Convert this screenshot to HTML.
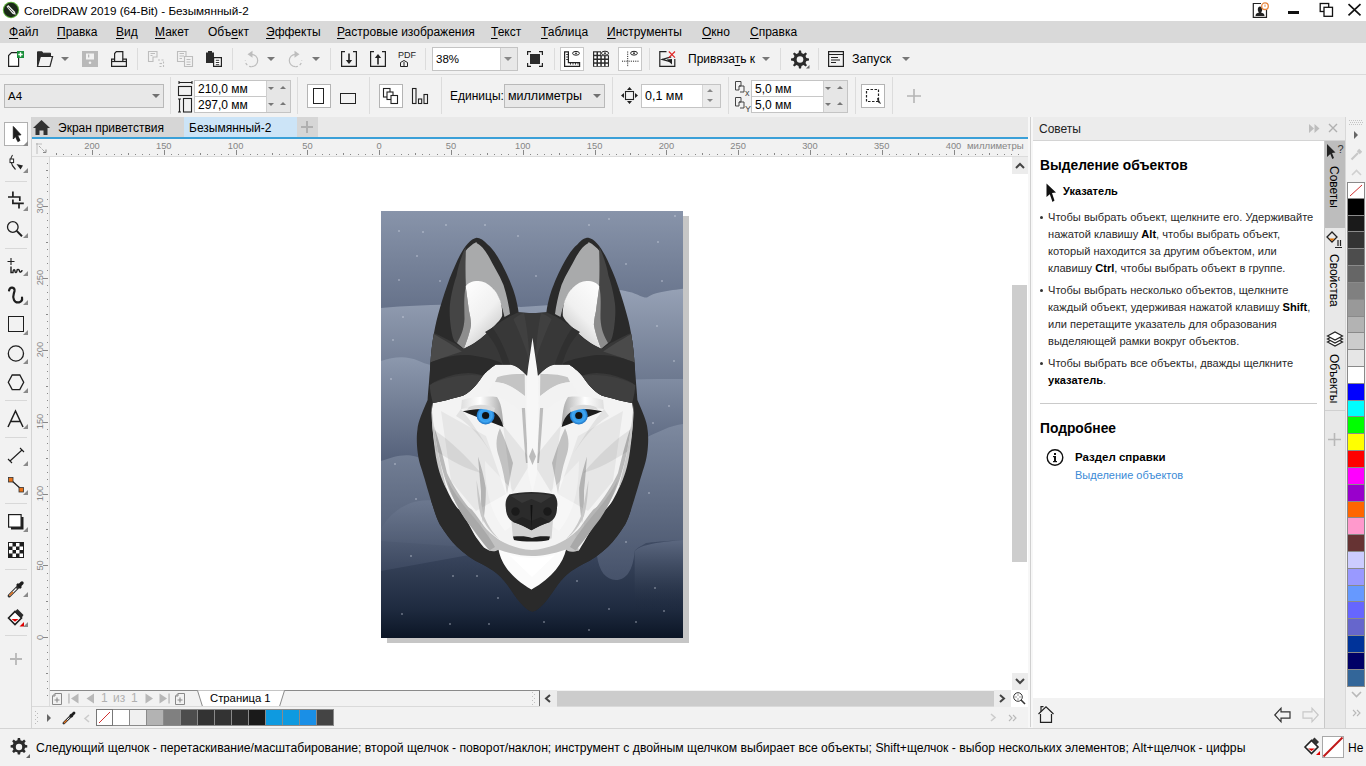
<!DOCTYPE html>
<html><head><meta charset="utf-8">
<style>
*{margin:0;padding:0;box-sizing:border-box}
html,body{width:1366px;height:766px;overflow:hidden;background:#f2f2f2;font-family:"Liberation Sans",sans-serif;color:#000}
.a{position:absolute}
.t{position:absolute;white-space:nowrap;font-size:12px;line-height:14px}
#title{left:0;top:0;width:1366px;height:21px;background:#fff}
#menu{left:0;top:21px;width:1366px;height:22px;background:#d9d9d9}
#std{left:0;top:43px;width:1366px;height:32px;background:#f2f2f2;border-bottom:1px solid #dadada}
#prop{left:0;top:75px;width:1366px;height:43px;background:#f2f2f2}
.vsep{position:absolute;width:1px;background:#dcdcdc}
.u{text-decoration:underline;text-underline-offset:2px}
.field{position:absolute;background:#fff;border:1px solid #c8c8c8}
.spin{position:absolute;background:#e6e6e6;border-left:1px solid #c8c8c8}
.dd{position:absolute;width:0;height:0;border-left:5px solid transparent;border-right:5px solid transparent;border-top:5px solid #666}
.du{position:absolute;width:0;height:0;border-left:4px solid transparent;border-right:4px solid transparent;border-bottom:4px solid #666}
.dn{position:absolute;width:0;height:0;border-left:4px solid transparent;border-right:4px solid transparent;border-top:4px solid #666}
svg{position:absolute;overflow:visible}
</style></head><body>

<!-- TITLE BAR -->
<div id="title" class="a"></div>
<svg style="left:2px;top:1px" width="18" height="18" viewBox="0 0 18 18"><circle cx="9" cy="9" r="8.2" fill="#5fae3a"/><circle cx="9" cy="9" r="7.2" fill="#1a2818"/><path d="M4.5 5.8 L6.3 4 L13 10.7 L13.8 13.8 L10.7 13 Z" fill="#e8e8e8"/><path d="M6.3 6.3 L11.5 11.5" stroke="#1a2818" stroke-width="0.7"/></svg>
<div class="t" style="left:24px;top:4px;font-size:11.7px">CorelDRAW 2019 (64-Bit) - Безымянный-2</div>

<!-- MENU -->
<div id="menu" class="a"></div>
<div class="t" style="left:9px;top:25px"><span class="u">Ф</span>айл</div>
<div class="t" style="left:57px;top:25px"><span class="u">П</span>равка</div>
<div class="t" style="left:116px;top:25px"><span class="u">В</span>ид</div>
<div class="t" style="left:155px;top:25px"><span class="u">М</span>акет</div>
<div class="t" style="left:208px;top:25px">Объ<span class="u">е</span>кт</div>
<div class="t" style="left:266px;top:25px"><span class="u">Э</span>ффекты</div>
<div class="t" style="left:337px;top:25px"><span class="u">Р</span>астровые изображения</div>
<div class="t" style="left:491px;top:25px"><span class="u">Т</span>екст</div>
<div class="t" style="left:541px;top:25px"><span class="u">Т</span>аблица</div>
<div class="t" style="left:607px;top:25px"><span class="u">И</span>нструменты</div>
<div class="t" style="left:702px;top:25px"><span class="u">О</span>кно</div>
<div class="t" style="left:750px;top:25px"><span class="u">С</span>правка</div>

<!-- STANDARD TOOLBAR -->
<div id="std" class="a"></div>


<!-- std icons -->
<svg style="left:8px;top:51px" width="17" height="16" viewBox="0 0 17 16"><path d="M3.5 1.6 H10.6 V15.4 H0.6 V4.5 Z" fill="#fff" stroke="#222" stroke-width="1.2"/><rect x="9" y="0" width="7" height="7" fill="#1a8f3a"/><path d="M12.5 1.3V5.7M10.3 3.5H14.7" stroke="#fff" stroke-width="1.4"/></svg>
<svg style="left:37px;top:51px" width="16" height="16" viewBox="0 0 16 16"><path d="M0.5 15.5 V0.8 H5 L6.5 2.2 H13.5 V5 H3.5 L0.5 15.5 Z" fill="#2b2b2b" stroke="#2b2b2b"/><path d="M0.5 15.5 L3.3 5.5 H15.6 L13 15.5 Z" fill="#f2f2f2" stroke="#2b2b2b" stroke-width="1.2"/></svg>
<div class="dd" style="left:61px;top:57px;border-left-width:4px;border-right-width:4px;border-top-width:4px;border-top-color:#777"></div>
<svg style="left:82px;top:51px" width="16" height="16" viewBox="0 0 16 16"><path d="M0 0 H16 V16 H0 Z" fill="#b9b9b9"/><rect x="4" y="2.5" width="8" height="6" fill="#f2f2f2"/><rect x="6" y="3.5" width="1.3" height="3" fill="#b9b9b9"/><circle cx="8" cy="11.7" r="1.3" fill="#f2f2f2"/></svg>
<svg style="left:111px;top:51px" width="16" height="16" viewBox="0 0 16 16"><path d="M0.6 8.2 H15.4 V15.4 H0.6 Z" fill="none" stroke="#222" stroke-width="1.2"/><path d="M3.6 10.5 V2.5 L5.3 0.6 H11.8 V10.5 H3.6" fill="#f2f2f2" stroke="#222" stroke-width="1.2"/><path d="M0.6 10.5 H15.4" stroke="#222" stroke-width="1.2"/></svg>
<div class="vsep" style="left:137px;top:48px;height:22px"></div>
<svg style="left:148px;top:51px" width="16" height="16" viewBox="0 0 16 16" fill="none" stroke="#bdbdbd" stroke-width="1.1"><path d="M0.5 0.5 H9 V6 H5 V10.5 H0.5 Z M2.5 2.5 H7 M2.5 4.5 H4.5"/><path d="M10 9 H15.5 V15.5 H10.5" stroke-dasharray="2 1.5"/><path d="M11.5 12.5H14"/></svg>
<svg style="left:177px;top:51px" width="16" height="16" viewBox="0 0 16 16" fill="none" stroke="#bdbdbd" stroke-width="1.1"><path d="M0.5 0.5 H9 V10.5 H0.5 Z M2.5 2.5H7M2.5 5H7M2.5 7.5H5"/><path d="M7.5 5.5 H15.5 V15.5 H7.5 Z" fill="#f2f2f2"/><path d="M9.5 8.5H13.5M9.5 11H13.5M9.5 13.5H13.5"/></svg>
<svg style="left:206px;top:51px" width="16" height="16" viewBox="0 0 16 16"><path d="M0 1.5 H2 V0 H6 V1.5 H8 V12 H0 Z" fill="#2b2b2b"/><path d="M7.6 6.6 H15.4 V15.4 H7.6 Z" fill="#fff" stroke="#222" stroke-width="1.2"/><path d="M9.8 9.3H13.2M9.8 11.5H13.2M9.8 13.7H13.2" stroke="#222" stroke-width="0.9"/></svg>
<div class="vsep" style="left:232px;top:48px;height:22px"></div>
<svg style="left:0;top:0" width="330" height="75" viewBox="0 0 330 75" fill="none" stroke="#bdbdbd" stroke-width="1.2"><path d="M251.5 54.3 A6.2 6.2 0 0 1 251.5 66.7"/><path d="M251.5 66.7 A6.2 6.2 0 0 1 245.3 60.5" stroke-dasharray="2.5 2"/><path d="M247.5 54.3 L252.5 50.8 L252.5 57.8 Z" fill="#bdbdbd" stroke="none"/><path d="M295.5 54.3 A6.2 6.2 0 0 0 295.5 66.7"/><path d="M295.5 66.7 A6.2 6.2 0 0 0 301.7 60.5" stroke-dasharray="2.5 2"/><path d="M299.5 54.3 L294.5 50.8 L294.5 57.8 Z" fill="#bdbdbd" stroke="none"/></svg>
<div class="dd" style="left:267px;top:57px;border-left-width:4px;border-right-width:4px;border-top-width:4px;border-top-color:#777"></div>

<div class="dd" style="left:312px;top:57px;border-left-width:4px;border-right-width:4px;border-top-width:4px;border-top-color:#777"></div>
<div class="vsep" style="left:330px;top:48px;height:22px"></div>
<svg style="left:341px;top:51px" width="16" height="16" viewBox="0 0 16 16"><path d="M4 0.6 H0.6 V15.4 H15.4 V0.6 H12" fill="none" stroke="#222" stroke-width="1.2"/><path d="M8 2.5 V11" stroke="#222" stroke-width="1.6"/><path d="M4.8 9 L8 13 L11.2 9 Z" fill="#222"/></svg>
<svg style="left:370px;top:51px" width="16" height="16" viewBox="0 0 16 16"><path d="M4 0.6 H0.6 V15.4 H15.4 V0.6 H12" fill="none" stroke="#222" stroke-width="1.2"/><path d="M8 5 V13.5" stroke="#222" stroke-width="1.6"/><path d="M4.8 7 L8 3 L11.2 7 Z" fill="#222"/></svg>
<div class="t" style="left:398px;top:51px;font-size:9px;line-height:9px;color:#222">PDF</div>
<svg style="left:400px;top:60px" width="8" height="7" viewBox="0 0 8 7" fill="none" stroke="#222" stroke-width="1"><path d="M0.5 2.5 L4 0.5 L7.5 2.5 V6.5 H0.5 Z M4 2 V6"/></svg>
<div class="vsep" style="left:425px;top:48px;height:22px"></div>
<div class="field" style="left:432px;top:47px;width:86px;height:24px;border-color:#c4c4c4"></div>
<div class="spin" style="left:500px;top:48px;width:17px;height:22px;background:#e8e8e8;border-left-color:#d0d0d0"></div>
<div class="dd" style="left:504px;top:57px;border-left-width:4px;border-right-width:4px;border-top-width:4px;border-top-color:#888"></div>
<div class="t" style="left:436px;top:52px;font-size:11.5px">38%</div>
<svg style="left:527px;top:51px" width="16" height="16" viewBox="0 0 16 16"><path d="M0.6 4 V0.6 H4 M12 0.6 H15.4 V4 M15.4 12 V15.4 H12 M4 15.4 H0.6 V12" fill="none" stroke="#222" stroke-width="1.2"/><rect x="3" y="3" width="10" height="10" fill="#2b2b2b"/></svg>
<div class="vsep" style="left:554px;top:48px;height:22px"></div>
<div class="a" style="left:560px;top:47px;width:24px;height:24px;background:#fff;border:1px solid #c8c8c8"></div>


<div class="a" style="left:618px;top:47px;width:24px;height:24px;background:#fff;border:1px solid #c8c8c8"></div>

<div class="vsep" style="left:649px;top:48px;height:22px"></div>

<svg style="left:0;top:0" width="700" height="75" viewBox="0 0 700 75">
<path d="M564.6 51.8 H568.4 V62.6 H579.6 V66.4 H564.6 Z" fill="#fff" stroke="#222" stroke-width="1.2"/>
<path d="M566.2 54.5 H568.4 M566.2 57 H568.4 M566.2 59.5 H568.4 M570.5 64.6 V62.6 M573 64.6 V62.6 M575.5 64.6 V62.6 M578 64.6 V62.6" stroke="#222" stroke-width="0.9"/>
<ellipse cx="576" cy="53.3" rx="3.4" ry="1.9" fill="#fff" stroke="#222" stroke-width="1"/><circle cx="576" cy="53.3" r="0.9" fill="#222"/>
<path d="M593 51.3 H601 V55.2 H609 V66.7 H593 Z" fill="#2b2b2b"/><rect x="594.2" y="52.4" width="2.3" height="2.3" fill="#fff"/><rect x="598.0" y="52.4" width="2.3" height="2.3" fill="#fff"/><rect x="594.2" y="56.2" width="2.3" height="2.3" fill="#fff"/><rect x="598.0" y="56.2" width="2.3" height="2.3" fill="#fff"/><rect x="601.8" y="56.2" width="2.3" height="2.3" fill="#fff"/><rect x="605.6" y="56.2" width="2.3" height="2.3" fill="#fff"/><rect x="594.2" y="60.0" width="2.3" height="2.3" fill="#fff"/><rect x="598.0" y="60.0" width="2.3" height="2.3" fill="#fff"/><rect x="601.8" y="60.0" width="2.3" height="2.3" fill="#fff"/><rect x="605.6" y="60.0" width="2.3" height="2.3" fill="#fff"/><rect x="594.2" y="63.8" width="2.3" height="2.3" fill="#fff"/><rect x="598.0" y="63.8" width="2.3" height="2.3" fill="#fff"/><rect x="601.8" y="63.8" width="2.3" height="2.3" fill="#fff"/><rect x="605.6" y="63.8" width="2.3" height="2.3" fill="#fff"/>
<ellipse cx="605" cy="53.2" rx="3.6" ry="2" fill="#f2f2f2" stroke="#222" stroke-width="1"/><circle cx="605" cy="53.2" r="0.9" fill="#222"/>
<path d="M627.7 51.5 V67" stroke="#222" stroke-width="1" stroke-dasharray="1.1 1.1"/><path d="M622 61.2 H638.5" stroke="#222" stroke-width="1" stroke-dasharray="1.1 1.1"/>
<ellipse cx="634" cy="53.2" rx="3.4" ry="1.9" fill="#fff" stroke="#222" stroke-width="1"/><circle cx="634" cy="53.2" r="0.9" fill="#222"/>
<path d="M666.5 51.6 H659.8 V66.4 H674.8 V59" fill="none" stroke="#222" stroke-width="1.2"/>
<path d="M671.2 56.8 L662.3 59.4 L671.2 62" fill="none" stroke="#222" stroke-width="1.3"/><path d="M666.5 59.5 L672 59 L672 64.5 Z" fill="#222"/>
<path d="M668.8 51.5 L675 57.7 M675 51.5 L668.8 57.7" stroke="#e02020" stroke-width="1.1"/>
</svg>
<div class="t" style="left:688px;top:52px;font-size:12px">Привяза<span class="u">т</span>ь к</div>
<div class="dd" style="left:762px;top:57px;border-left-width:4px;border-right-width:4px;border-top-width:4px;border-top-color:#777"></div>
<div class="vsep" style="left:780px;top:48px;height:22px"></div>
<svg style="left:791px;top:50px" width="19" height="19" viewBox="0 0 19 19"><path d="M9 0.5 L11 0.5 L11.5 3 L13.5 3.9 L15.6 2.4 L17 3.8 L15.5 5.9 L16.4 8 L19 8.5 L19 10.5 L16.4 11 L15.5 13.1 L17 15.2 L15.6 16.6 L13.5 15.1 L11.5 16 L11 18.5 L9 18.5 L8.5 16 L6.5 15.1 L4.4 16.6 L3 15.2 L4.5 13.1 L3.6 11 L1 10.5 L1 8.5 L3.6 8 L4.5 5.9 L3 3.8 L4.4 2.4 L6.5 3.9 L8.5 3 Z" transform="translate(-1,0)" fill="#2b2b2b"/><circle cx="9" cy="9.5" r="3.3" fill="#f2f2f2"/><path d="M15 18.5 L18.5 15 V18.5 Z" fill="#666"/></svg>
<div class="vsep" style="left:818px;top:48px;height:22px"></div>
<svg style="left:828px;top:51px" width="16" height="16" viewBox="0 0 16 16" fill="none" stroke="#222" stroke-width="1.2"><rect x="0.6" y="0.6" width="14.8" height="14.8"/><path d="M0.6 3.5 H15.4 M3 6.5H10M3 9H12M3 11.5H8"/></svg>
<div class="t" style="left:852px;top:52px;font-size:12.5px">Запуск</div>
<div class="dd" style="left:902px;top:57px;border-left-width:4px;border-right-width:4px;border-top-width:4px;border-top-color:#777"></div>

<!-- PROPERTY BAR -->
<div id="prop" class="a"></div>

<!-- prop content -->
<div class="a" style="left:4px;top:84px;width:160px;height:24px;background:#e8e8e8;border:1px solid #b9b9b9"></div>
<div class="t" style="left:8px;top:89px;font-size:11.5px">A4</div>
<div class="dd" style="left:152px;top:94px;border-left-width:4px;border-right-width:4px;border-top-width:4px;border-top-color:#707070"></div>
<div class="vsep" style="left:170px;top:77px;height:37px"></div>
<svg style="left:178px;top:81px" width="16" height="32" viewBox="0 0 16 32" fill="none" stroke="#222" stroke-width="1.1"><path d="M1 1.5 H14 M1 0 V3 M14 0 V3"/><rect x="0.5" y="5.5" width="13" height="9"/><path d="M1.5 18 V31 M0 18H3M0 31H3"/><rect x="5.5" y="17.5" width="8" height="13.5"/></svg>
<div class="field" style="left:194px;top:80px;width:97px;height:33px;border-color:#c4c4c4"></div>
<div class="a" style="left:195px;top:96px;width:95px;height:1px;background:#c8c8c8"></div>
<div class="spin" style="left:266px;top:81px;width:24px;height:31px;background:#e6e6e6;border-left-color:#cfcfcf"></div>
<div class="dn" style="left:268px;top:87px;border-left-width:3.5px;border-right-width:3.5px;border-top-width:3.5px;border-top-color:#777"></div>
<div class="du" style="left:280px;top:86px;border-left-width:3.5px;border-right-width:3.5px;border-bottom-width:3.5px;border-bottom-color:#777"></div>
<div class="dn" style="left:268px;top:103px;border-left-width:3.5px;border-right-width:3.5px;border-top-width:3.5px;border-top-color:#777"></div>
<div class="du" style="left:280px;top:102px;border-left-width:3.5px;border-right-width:3.5px;border-bottom-width:3.5px;border-bottom-color:#777"></div>
<div class="t" style="left:198px;top:82px;font-size:12px">210,0 мм</div>
<div class="t" style="left:198px;top:98px;font-size:12px">297,0 мм</div>
<div class="vsep" style="left:297px;top:77px;height:37px"></div>
<div class="a" style="left:307px;top:84px;width:24px;height:24px;background:#fff;border:1px solid #b4b4b4"></div>
<div class="a" style="left:313px;top:88px;width:11px;height:16px;border:1.2px solid #222"></div>
<div class="a" style="left:340px;top:93px;width:16px;height:11px;border:1.2px solid #222"></div>
<div class="vsep" style="left:369px;top:77px;height:37px"></div>
<div class="a" style="left:379px;top:84px;width:24px;height:24px;background:#fff;border:1px solid #b4b4b4"></div>
<svg style="left:383px;top:88px" width="16" height="16" viewBox="0 0 16 16" fill="#fff" stroke="#222" stroke-width="1.1"><rect x="0.5" y="0.5" width="6.5" height="8.5"/><rect x="4" y="4" width="6" height="7.5"/><rect x="8" y="7.5" width="6.5" height="8"/></svg>
<svg style="left:411px;top:88px" width="18" height="16" viewBox="0 0 18 16" fill="none" stroke="#222" stroke-width="1.1"><rect x="1.5" y="0.5" width="3.5" height="15"/><rect x="7.5" y="11" width="3.2" height="4.5"/><rect x="13" y="6.5" width="3.5" height="9"/></svg>
<div class="vsep" style="left:441px;top:77px;height:37px"></div>
<div class="t" style="left:450px;top:89px;font-size:12px">Единицы:</div>
<div class="a" style="left:504px;top:84px;width:101px;height:24px;background:#e8e8e8;border:1px solid #b9b9b9"></div>
<div class="t" style="left:508px;top:89px;font-size:12.5px">миллиметры</div>
<div class="dd" style="left:593px;top:94px;border-left-width:4px;border-right-width:4px;border-top-width:4px;border-top-color:#707070"></div>
<div class="vsep" style="left:612px;top:77px;height:37px"></div>
<svg style="left:621px;top:87px" width="17" height="17" viewBox="0 0 17 17"><path d="M8.5 0 L11 3 H6 Z M8.5 17 L11 14 H6 Z M0 8.5 L3 6 V11 Z M17 8.5 L14 6 V11 Z" fill="#222"/><rect x="4.5" y="4.5" width="8" height="8" fill="none" stroke="#222" stroke-width="1.1"/></svg>
<div class="field" style="left:641px;top:84px;width:80px;height:24px;border-color:#c4c4c4"></div>
<div class="spin" style="left:702px;top:85px;width:18px;height:22px;background:#ebebeb;border-left-color:#d6d6d6"></div>
<div class="du" style="left:707px;top:89px;border-left-width:3.5px;border-right-width:3.5px;border-bottom-width:3.5px;border-bottom-color:#888"></div>
<div class="dn" style="left:707px;top:99px;border-left-width:3.5px;border-right-width:3.5px;border-top-width:3.5px;border-top-color:#888"></div>
<div class="t" style="left:645px;top:89px;font-size:12.5px">0,1 мм</div>
<div class="vsep" style="left:728px;top:77px;height:37px"></div>
<svg style="left:735px;top:81px" width="16" height="31" viewBox="0 0 16 31" fill="none" stroke="#444" stroke-width="1"><path d="M0.5 0.5H6V5H4V9H0.5Z M4 5H9V11H5"/><path d="M0.5 16.5H6V21H4V25H0.5Z M4 21H9V27H5"/></svg>
<div class="t" style="left:745px;top:89px;font-size:9px;line-height:9px;color:#444">x</div>
<div class="t" style="left:745px;top:105px;font-size:9px;line-height:9px;color:#444">Y</div>
<div class="field" style="left:751px;top:80px;width:97px;height:33px;border-color:#c4c4c4"></div>
<div class="a" style="left:752px;top:96px;width:95px;height:1px;background:#c8c8c8"></div>
<div class="spin" style="left:823px;top:81px;width:24px;height:31px;background:#e6e6e6;border-left-color:#cfcfcf"></div>
<div class="dn" style="left:825px;top:87px;border-left-width:3.5px;border-right-width:3.5px;border-top-width:3.5px;border-top-color:#777"></div>
<div class="du" style="left:837px;top:86px;border-left-width:3.5px;border-right-width:3.5px;border-bottom-width:3.5px;border-bottom-color:#777"></div>
<div class="dn" style="left:825px;top:103px;border-left-width:3.5px;border-right-width:3.5px;border-top-width:3.5px;border-top-color:#777"></div>
<div class="du" style="left:837px;top:102px;border-left-width:3.5px;border-right-width:3.5px;border-bottom-width:3.5px;border-bottom-color:#777"></div>
<div class="t" style="left:755px;top:82px;font-size:12px">5,0 мм</div>
<div class="t" style="left:755px;top:98px;font-size:12px">5,0 мм</div>
<div class="vsep" style="left:855px;top:77px;height:37px"></div>
<div class="a" style="left:861px;top:84px;width:24px;height:24px;background:#fff;border:1px solid #b4b4b4"></div>
<svg style="left:865px;top:88px" width="16" height="16" viewBox="0 0 16 16" fill="none" stroke="#222" stroke-width="1.2"><rect x="1.5" y="1.5" width="12" height="12" stroke-dasharray="2.5 1.5"/><path d="M12.5 10 L15.5 15.5 L13 14 Z" fill="#222" stroke-width="0.6"/></svg>
<div class="vsep" style="left:892px;top:77px;height:37px"></div>
<svg style="left:907px;top:89px" width="14" height="14" viewBox="0 0 14 14"><path d="M7 0V14M0 7H14" stroke="#b5b5b5" stroke-width="1.6"/></svg>

<!-- TOOLBOX -->
<div class="a" style="left:0;top:117px;width:31px;height:611px;background:#f2f2f2"></div>
<div class="a" style="left:31px;top:117px;width:1px;height:611px;background:#d4d4d4"></div>

<!-- TABS ROW -->
<div class="a" style="left:32px;top:117px;width:996px;height:21px;background:#e9e9e9"></div>
<div class="a" style="left:32px;top:117px;width:152px;height:21px;background:#d6d6d6"></div>
<div class="a" style="left:184px;top:117px;width:113px;height:21px;background:#cce4f7"></div>
<div class="a" style="left:297px;top:117px;width:21px;height:21px;background:#d6d6d6"></div>
<svg style="left:300px;top:120px" width="14" height="14" viewBox="0 0 14 14"><path d="M7 1V13M1 7H13" stroke="#b0b0b0" stroke-width="2"/></svg>
<div class="a" style="left:32px;top:137px;width:996px;height:2px;background:#3aa0d8"></div>
<svg style="left:33px;top:120px" width="17" height="15" viewBox="0 0 17 15"><path d="M8.5 0 L17 8 H14.5 V15 H10.5 V10.5 H6.5 V15 H2.5 V8 H0 Z" fill="#333"/></svg>
<div class="t" style="left:58px;top:121px;font-size:12px">Экран приветствия</div>
<div class="t" style="left:189px;top:121px;font-size:12px">Безымянный-2</div>

<!-- RULERS -->
<div class="a" style="left:32px;top:139px;width:996px;height:18px;background:#f2f2f2;border-bottom:1px solid #dcdcdc"></div>
<div class="a" style="left:32px;top:157px;width:18px;height:550px;background:#f2f2f2;border-right:1px solid #dcdcdc"></div>
<svg style="left:36px;top:143px" width="12" height="12" viewBox="0 0 12 12" fill="none" stroke="#888" stroke-width="1"><path d="M1 0.5V11M0.5 1H6M3 3L9 9" stroke-dasharray="1 1"/><path d="M7 9.5H10V6.5" stroke="#888"/></svg>
<div id="hr"><svg class="a" style="left:0;top:0" width="1366" height="766" viewBox="0 0 1366 766"><g><rect x="56" y="153" width="1" height="2" fill="#888"/><rect x="63" y="154" width="1" height="1" fill="#888"/><rect x="71" y="154" width="1" height="1" fill="#888"/><rect x="78" y="154" width="1" height="1" fill="#888"/><rect x="85" y="154" width="1" height="1" fill="#888"/><rect x="92" y="150" width="1" height="5" fill="#888"/><rect x="99" y="154" width="1" height="1" fill="#888"/><rect x="106" y="154" width="1" height="1" fill="#888"/><rect x="114" y="154" width="1" height="1" fill="#888"/><rect x="121" y="154" width="1" height="1" fill="#888"/><rect x="128" y="153" width="1" height="2" fill="#888"/><rect x="135" y="154" width="1" height="1" fill="#888"/><rect x="142" y="154" width="1" height="1" fill="#888"/><rect x="149" y="154" width="1" height="1" fill="#888"/><rect x="157" y="154" width="1" height="1" fill="#888"/><rect x="164" y="150" width="1" height="5" fill="#888"/><rect x="171" y="154" width="1" height="1" fill="#888"/><rect x="178" y="154" width="1" height="1" fill="#888"/><rect x="185" y="154" width="1" height="1" fill="#888"/><rect x="193" y="154" width="1" height="1" fill="#888"/><rect x="200" y="153" width="1" height="2" fill="#888"/><rect x="207" y="154" width="1" height="1" fill="#888"/><rect x="214" y="154" width="1" height="1" fill="#888"/><rect x="221" y="154" width="1" height="1" fill="#888"/><rect x="228" y="154" width="1" height="1" fill="#888"/><rect x="236" y="150" width="1" height="5" fill="#888"/><rect x="243" y="154" width="1" height="1" fill="#888"/><rect x="250" y="154" width="1" height="1" fill="#888"/><rect x="257" y="154" width="1" height="1" fill="#888"/><rect x="264" y="154" width="1" height="1" fill="#888"/><rect x="272" y="153" width="1" height="2" fill="#888"/><rect x="279" y="154" width="1" height="1" fill="#888"/><rect x="286" y="154" width="1" height="1" fill="#888"/><rect x="293" y="154" width="1" height="1" fill="#888"/><rect x="300" y="154" width="1" height="1" fill="#888"/><rect x="307" y="150" width="1" height="5" fill="#888"/><rect x="315" y="154" width="1" height="1" fill="#888"/><rect x="322" y="154" width="1" height="1" fill="#888"/><rect x="329" y="154" width="1" height="1" fill="#888"/><rect x="336" y="154" width="1" height="1" fill="#888"/><rect x="343" y="153" width="1" height="2" fill="#888"/><rect x="350" y="154" width="1" height="1" fill="#888"/><rect x="358" y="154" width="1" height="1" fill="#888"/><rect x="365" y="154" width="1" height="1" fill="#888"/><rect x="372" y="154" width="1" height="1" fill="#888"/><rect x="379" y="150" width="1" height="5" fill="#888"/><rect x="386" y="154" width="1" height="1" fill="#888"/><rect x="394" y="154" width="1" height="1" fill="#888"/><rect x="401" y="154" width="1" height="1" fill="#888"/><rect x="408" y="154" width="1" height="1" fill="#888"/><rect x="415" y="153" width="1" height="2" fill="#888"/><rect x="422" y="154" width="1" height="1" fill="#888"/><rect x="429" y="154" width="1" height="1" fill="#888"/><rect x="437" y="154" width="1" height="1" fill="#888"/><rect x="444" y="154" width="1" height="1" fill="#888"/><rect x="451" y="150" width="1" height="5" fill="#888"/><rect x="458" y="154" width="1" height="1" fill="#888"/><rect x="465" y="154" width="1" height="1" fill="#888"/><rect x="473" y="154" width="1" height="1" fill="#888"/><rect x="480" y="154" width="1" height="1" fill="#888"/><rect x="487" y="153" width="1" height="2" fill="#888"/><rect x="494" y="154" width="1" height="1" fill="#888"/><rect x="501" y="154" width="1" height="1" fill="#888"/><rect x="508" y="154" width="1" height="1" fill="#888"/><rect x="516" y="154" width="1" height="1" fill="#888"/><rect x="523" y="150" width="1" height="5" fill="#888"/><rect x="530" y="154" width="1" height="1" fill="#888"/><rect x="537" y="154" width="1" height="1" fill="#888"/><rect x="544" y="154" width="1" height="1" fill="#888"/><rect x="551" y="154" width="1" height="1" fill="#888"/><rect x="559" y="153" width="1" height="2" fill="#888"/><rect x="566" y="154" width="1" height="1" fill="#888"/><rect x="573" y="154" width="1" height="1" fill="#888"/><rect x="580" y="154" width="1" height="1" fill="#888"/><rect x="587" y="154" width="1" height="1" fill="#888"/><rect x="595" y="150" width="1" height="5" fill="#888"/><rect x="602" y="154" width="1" height="1" fill="#888"/><rect x="609" y="154" width="1" height="1" fill="#888"/><rect x="616" y="154" width="1" height="1" fill="#888"/><rect x="623" y="154" width="1" height="1" fill="#888"/><rect x="630" y="153" width="1" height="2" fill="#888"/><rect x="638" y="154" width="1" height="1" fill="#888"/><rect x="645" y="154" width="1" height="1" fill="#888"/><rect x="652" y="154" width="1" height="1" fill="#888"/><rect x="659" y="154" width="1" height="1" fill="#888"/><rect x="666" y="150" width="1" height="5" fill="#888"/><rect x="674" y="154" width="1" height="1" fill="#888"/><rect x="681" y="154" width="1" height="1" fill="#888"/><rect x="688" y="154" width="1" height="1" fill="#888"/><rect x="695" y="154" width="1" height="1" fill="#888"/><rect x="702" y="153" width="1" height="2" fill="#888"/><rect x="709" y="154" width="1" height="1" fill="#888"/><rect x="717" y="154" width="1" height="1" fill="#888"/><rect x="724" y="154" width="1" height="1" fill="#888"/><rect x="731" y="154" width="1" height="1" fill="#888"/><rect x="738" y="150" width="1" height="5" fill="#888"/><rect x="745" y="154" width="1" height="1" fill="#888"/><rect x="753" y="154" width="1" height="1" fill="#888"/><rect x="760" y="154" width="1" height="1" fill="#888"/><rect x="767" y="154" width="1" height="1" fill="#888"/><rect x="774" y="153" width="1" height="2" fill="#888"/><rect x="781" y="154" width="1" height="1" fill="#888"/><rect x="788" y="154" width="1" height="1" fill="#888"/><rect x="796" y="154" width="1" height="1" fill="#888"/><rect x="803" y="154" width="1" height="1" fill="#888"/><rect x="810" y="150" width="1" height="5" fill="#888"/><rect x="817" y="154" width="1" height="1" fill="#888"/><rect x="824" y="154" width="1" height="1" fill="#888"/><rect x="831" y="154" width="1" height="1" fill="#888"/><rect x="839" y="154" width="1" height="1" fill="#888"/><rect x="846" y="153" width="1" height="2" fill="#888"/><rect x="853" y="154" width="1" height="1" fill="#888"/><rect x="860" y="154" width="1" height="1" fill="#888"/><rect x="867" y="154" width="1" height="1" fill="#888"/><rect x="875" y="154" width="1" height="1" fill="#888"/><rect x="882" y="150" width="1" height="5" fill="#888"/><rect x="889" y="154" width="1" height="1" fill="#888"/><rect x="896" y="154" width="1" height="1" fill="#888"/><rect x="903" y="154" width="1" height="1" fill="#888"/><rect x="910" y="154" width="1" height="1" fill="#888"/><rect x="918" y="153" width="1" height="2" fill="#888"/><rect x="925" y="154" width="1" height="1" fill="#888"/><rect x="932" y="154" width="1" height="1" fill="#888"/><rect x="939" y="154" width="1" height="1" fill="#888"/><rect x="946" y="154" width="1" height="1" fill="#888"/><rect x="954" y="150" width="1" height="5" fill="#888"/><rect x="961" y="154" width="1" height="1" fill="#888"/><rect x="968" y="154" width="1" height="1" fill="#888"/><rect x="975" y="154" width="1" height="1" fill="#888"/><rect x="982" y="154" width="1" height="1" fill="#888"/><rect x="989" y="153" width="1" height="2" fill="#888"/><rect x="997" y="154" width="1" height="1" fill="#888"/><rect x="1004" y="154" width="1" height="1" fill="#888"/><rect x="1011" y="154" width="1" height="1" fill="#888"/><rect x="1018" y="154" width="1" height="1" fill="#888"/></g><g font-family="Liberation Sans" font-size="9.3" fill="#858585"><text x="92.0" y="149" text-anchor="middle">200</text><text x="163.8" y="149" text-anchor="middle">150</text><text x="235.6" y="149" text-anchor="middle">100</text><text x="307.4" y="149" text-anchor="middle">50</text><text x="379.2" y="149" text-anchor="middle">0</text><text x="451.0" y="149" text-anchor="middle">50</text><text x="522.8" y="149" text-anchor="middle">100</text><text x="594.6" y="149" text-anchor="middle">150</text><text x="666.4" y="149" text-anchor="middle">200</text><text x="738.1" y="149" text-anchor="middle">250</text><text x="809.9" y="149" text-anchor="middle">300</text><text x="881.7" y="149" text-anchor="middle">350</text><text x="953.5" y="149" text-anchor="middle">400</text><text x="967" y="149" font-size="9.6">миллиметры</text></g></svg></div>
<div id="vr"><svg class="a" style="left:0;top:0" width="1366" height="766" viewBox="0 0 1366 766"><g><rect x="47" y="695" width="1" height="1" fill="#888"/><rect x="47" y="688" width="1" height="1" fill="#888"/><rect x="47" y="681" width="1" height="1" fill="#888"/><rect x="46" y="673" width="2" height="1" fill="#888"/><rect x="47" y="666" width="1" height="1" fill="#888"/><rect x="47" y="659" width="1" height="1" fill="#888"/><rect x="47" y="652" width="1" height="1" fill="#888"/><rect x="47" y="645" width="1" height="1" fill="#888"/><rect x="43" y="637" width="5" height="1" fill="#888"/><rect x="47" y="630" width="1" height="1" fill="#888"/><rect x="47" y="623" width="1" height="1" fill="#888"/><rect x="47" y="616" width="1" height="1" fill="#888"/><rect x="47" y="609" width="1" height="1" fill="#888"/><rect x="46" y="601" width="2" height="1" fill="#888"/><rect x="47" y="594" width="1" height="1" fill="#888"/><rect x="47" y="587" width="1" height="1" fill="#888"/><rect x="47" y="580" width="1" height="1" fill="#888"/><rect x="47" y="573" width="1" height="1" fill="#888"/><rect x="43" y="565" width="5" height="1" fill="#888"/><rect x="47" y="558" width="1" height="1" fill="#888"/><rect x="47" y="551" width="1" height="1" fill="#888"/><rect x="47" y="544" width="1" height="1" fill="#888"/><rect x="47" y="537" width="1" height="1" fill="#888"/><rect x="46" y="529" width="2" height="1" fill="#888"/><rect x="47" y="522" width="1" height="1" fill="#888"/><rect x="47" y="515" width="1" height="1" fill="#888"/><rect x="47" y="508" width="1" height="1" fill="#888"/><rect x="47" y="501" width="1" height="1" fill="#888"/><rect x="43" y="494" width="5" height="1" fill="#888"/><rect x="47" y="486" width="1" height="1" fill="#888"/><rect x="47" y="479" width="1" height="1" fill="#888"/><rect x="47" y="472" width="1" height="1" fill="#888"/><rect x="47" y="465" width="1" height="1" fill="#888"/><rect x="46" y="458" width="2" height="1" fill="#888"/><rect x="47" y="450" width="1" height="1" fill="#888"/><rect x="47" y="443" width="1" height="1" fill="#888"/><rect x="47" y="436" width="1" height="1" fill="#888"/><rect x="47" y="429" width="1" height="1" fill="#888"/><rect x="43" y="422" width="5" height="1" fill="#888"/><rect x="47" y="414" width="1" height="1" fill="#888"/><rect x="47" y="407" width="1" height="1" fill="#888"/><rect x="47" y="400" width="1" height="1" fill="#888"/><rect x="47" y="393" width="1" height="1" fill="#888"/><rect x="46" y="386" width="2" height="1" fill="#888"/><rect x="47" y="378" width="1" height="1" fill="#888"/><rect x="47" y="371" width="1" height="1" fill="#888"/><rect x="47" y="364" width="1" height="1" fill="#888"/><rect x="47" y="357" width="1" height="1" fill="#888"/><rect x="43" y="350" width="5" height="1" fill="#888"/><rect x="47" y="342" width="1" height="1" fill="#888"/><rect x="47" y="335" width="1" height="1" fill="#888"/><rect x="47" y="328" width="1" height="1" fill="#888"/><rect x="47" y="321" width="1" height="1" fill="#888"/><rect x="46" y="314" width="2" height="1" fill="#888"/><rect x="47" y="306" width="1" height="1" fill="#888"/><rect x="47" y="299" width="1" height="1" fill="#888"/><rect x="47" y="292" width="1" height="1" fill="#888"/><rect x="47" y="285" width="1" height="1" fill="#888"/><rect x="43" y="278" width="5" height="1" fill="#888"/><rect x="47" y="270" width="1" height="1" fill="#888"/><rect x="47" y="263" width="1" height="1" fill="#888"/><rect x="47" y="256" width="1" height="1" fill="#888"/><rect x="47" y="249" width="1" height="1" fill="#888"/><rect x="46" y="242" width="2" height="1" fill="#888"/><rect x="47" y="234" width="1" height="1" fill="#888"/><rect x="47" y="227" width="1" height="1" fill="#888"/><rect x="47" y="220" width="1" height="1" fill="#888"/><rect x="47" y="213" width="1" height="1" fill="#888"/><rect x="43" y="206" width="5" height="1" fill="#888"/><rect x="47" y="199" width="1" height="1" fill="#888"/><rect x="47" y="191" width="1" height="1" fill="#888"/><rect x="47" y="184" width="1" height="1" fill="#888"/><rect x="47" y="177" width="1" height="1" fill="#888"/><rect x="46" y="170" width="2" height="1" fill="#888"/><rect x="47" y="163" width="1" height="1" fill="#888"/></g><g font-family="Liberation Sans" font-size="9.3" fill="#858585"><text transform="translate(42.5,637.4) rotate(-90)" text-anchor="middle">0</text><text transform="translate(42.5,565.4) rotate(-90)" text-anchor="middle">50</text><text transform="translate(42.5,493.5) rotate(-90)" text-anchor="middle">100</text><text transform="translate(42.5,421.5) rotate(-90)" text-anchor="middle">150</text><text transform="translate(42.5,349.6) rotate(-90)" text-anchor="middle">200</text><text transform="translate(42.5,277.6) rotate(-90)" text-anchor="middle">250</text><text transform="translate(42.5,205.7) rotate(-90)" text-anchor="middle">300</text></g></svg></div>

<!-- CANVAS -->
<div class="a" style="left:50px;top:157px;width:978px;height:533px;background:#fff"></div>
<!-- HUSKY START -->
<div class="a" style="left:387px;top:216px;width:302px;height:427px;background:#c6c6c6"></div>
<svg style="left:381px;top:211px" width="302" height="427" viewBox="0 0 302 427">
<defs>
<linearGradient id="sky" x1="0" y1="0" x2="0" y2="1">
<stop offset="0" stop-color="#8894aa"/><stop offset="0.23" stop-color="#66728a"/><stop offset="0.6" stop-color="#56627a"/><stop offset="0.78" stop-color="#3e4a62"/><stop offset="0.93" stop-color="#1f2b40"/><stop offset="1" stop-color="#0b1525"/></linearGradient>
<linearGradient id="b1" x1="0" y1="0" x2="0" y2="1"><stop offset="0" stop-color="#96a1b5"/><stop offset="1" stop-color="#6a768d"/></linearGradient>
<linearGradient id="b2" x1="0" y1="0" x2="0" y2="1"><stop offset="0" stop-color="#8c98ad"/><stop offset="1" stop-color="#55617a"/></linearGradient>
<linearGradient id="b3" x1="0" y1="0" x2="0" y2="1"><stop offset="0" stop-color="#7d899f"/><stop offset="1" stop-color="#46526a"/></linearGradient>
<linearGradient id="b4" x1="0" y1="0" x2="0" y2="1"><stop offset="0" stop-color="#6e7a91"/><stop offset="1" stop-color="#3e4a62"/></linearGradient>
<linearGradient id="earw" x1="0" y1="0" x2="0.6" y2="1"><stop offset="0" stop-color="#ffffff"/><stop offset="0.6" stop-color="#f0f0f0"/><stop offset="1" stop-color="#c8c8c8"/></linearGradient>
<linearGradient id="brow" x1="0" y1="0" x2="1" y2="0"><stop offset="0" stop-color="#dedede"/><stop offset="0.45" stop-color="#ffffff"/><stop offset="1" stop-color="#a8a8a8"/></linearGradient>
<radialGradient id="iris" cx="0.5" cy="0.5" r="0.5"><stop offset="0" stop-color="#1f7fd8"/><stop offset="0.7" stop-color="#3ea6f2"/><stop offset="1" stop-color="#1b6fc0"/></radialGradient>
<g id="halfL">
<!-- ear inner gray -->
<path d="M95.6 31 C91 33 87 37 84.5 40 C84 52 84 65 84.5 76 L112 77.4 C118 85 121 95 123.5 106 L129 103 C128 95 126 85 122.5 74 C118 63 112 54 108 46 C104 39 100 34 95.6 32 Z" fill="#a9aaab"/>
<!-- ear dark gray -->
<path d="M84.7 36 C80 46 77 56 75.5 64.7 C72 75 70 85 69.1 92 C68 100 69 110 70 117.6 C71 124 72 128 73.7 130.4 L82.8 137.7 C85 132 88 125 90.1 114 C90 108 88 102 87.4 95.7 C86 88 84.7 80 84.7 75.6 C84.3 62 84.3 48 84.7 36 Z" fill="#454545"/>
<!-- ear gray crescent -->
<path d="M84.7 75.6 C86 85 87.4 95.7 88 100 C90 108 90.1 114 90.1 114 C88 125 85 132 82.8 137.7 L76 132 C80 125 83 118 83.5 108 C83.5 96 82.5 86 84.7 75.6 Z" fill="#8d8d8d"/>
<!-- ear white leaf -->
<path d="M97.4 70 C91 70 86.5 72 84.7 75.6 C86 85 87.4 95.7 88 100 C90 108 90.1 114 90.1 114 C88 125 85 132 82.8 137.7 C93 133 101 127 106.6 121.3 C114 114 120 109 121.2 104.8 C121.5 99 120.5 94 119.4 90 C117 84 114.5 79.5 112 77.4 C107 72.5 102 70 97.4 70 Z" fill="url(#earw)"/>
<!-- cap under ear -->
<path d="M49 121 C55 122 65 128 71.2 131 C78 134 81 138 82.8 137.7 C95 133 105 124 111.5 116.4 C120 110 130 104 137.6 101.2 C142 101.5 146 101.9 152.5 101.9 L152.5 126.8 C149 140 147 152 146.1 164.7 C140 158 134 154 129.2 153.4 L114.7 153.4 C108 158 104 162 101.8 164.7 C95 175 88 183 79 185.6 C70 188 60 191 51.9 192 C50 175 49 150 49 121 Z" fill="#383838"/>
<path d="M49 121 C58 126 70 133 80.9 140.5 C70 144 58 148 48.7 151.8 Z" fill="#4a4a4a"/>
<path d="M48.7 151.8 C62 146 80 141 100 146 C110 148 118 150 122 153.4 L114.7 153.4 C108 158 104 162 101.8 164.7 C90 160 75 162 60 168 C55 170 51 172 48.7 174 Z" fill="#2b2b2b"/>
<path d="M48.7 174 C60 168 80 162 101.8 164.7 C95 175 88 183 79 185.6 C70 188 60 191 51.9 192 C50 185 49 180 48.7 174 Z" fill="#3f3f3f"/>
<path d="M132.4 108.3 C136 105 140 103 143 102 C146 115 148 135 148.5 150.2 C144 135 138 120 132.4 108.3 Z" fill="#404040"/>
<path d="M111.5 116.4 C118 125 124 138 129.2 153.4 L122 153.4 C118 140 112 128 104 121 Z" fill="#303030"/>
<!-- mask facets left -->
<path d="M116.3 166.3 C125 163 135 163 143.7 163 L144 185 C135 178 125 172 114 171 Z" fill="#c4c4c4"/>
<path d="M112 172 C122 170 134 176 144 186 L144 205 C135 195 122 186 106 182 Z" fill="#f2f2f2"/>
<path d="M80.9 188.9 C92 186 105 185 116 186 C120 192 121 198 122.5 214 C112 202 100 196 80 198 Z" fill="url(#brow)"/>
<path d="M50 193.7 C52 210 54 225 56 236 C58 248 62 262 65.6 278.3 C60 268 56 255 54 240 C52 225 50.5 210 50 193.7 Z" fill="#c8c8c8"/>
<path d="M53 215 C58 230 62 245 66 262 C72 275 82 290 92 302 L86 300 C76 290 68 276 62.5 262.6 C58 248 55 232 53 215 Z" fill="#bababa"/>
<path d="M97 245.4 C100 255 103 265 104.8 276.7 C105 290 104 300 102 312 C100 300 100 290 100 280 C99 270 98 258 97 245.4 Z" fill="#bdbdbd"/>
<path d="M118.9 217.2 C124 228 128 240 132 252 C130 262 128 272 126 283 C124 270 122 258 118 246 C115 238 114 228 118.9 217.2 Z" fill="#c2c2c2"/>
<path d="M140.8 197 C142 215 143 232 145 252 L147 252 C146 232 145 215 144 197 Z" fill="#bcbcbc"/>
<path d="M80 198 C90 210 100 225 112 245 C104 232 92 215 75 205 Z" fill="#e2e2e2"/>
<path d="M62.5 262.6 C70 278 80 292 90.7 298.6 C100 310 108 322 114 336 C105 326 95 314 86 306 C76 296 68 282 62.5 262.6 Z" fill="#b6b6b6"/>
<path d="M100 312 C108 322 120 332 134 338 C120 336 108 328 100 320 Z" fill="#bdbdbd"/>
<!-- eye -->
<path d="M81.6 200.2 C92 198.5 104 196 113 201 C118 204 121 210 122.4 215.9 C115 213 106 210 96 206 C90 203.5 85 201.5 81.6 200.2 Z" fill="#1c1c1c"/>
</g>
<clipPath id="clipS"><path d="M95.6 26.7 C88 28 80 40 73.7 55.5 C67 70 60 92 55.4 110.3 C52 125 50 140 49 159 C48 172 47 182 46.6 189 C42 200 37 210 36.4 219 C35 228 36 245 40 256.2 C43 265 47 280 51.3 293.5 C54 302 56 308 58.7 313.3 C64 322 70 330 76 335.7 C84 343 92 349 100.9 353 C106 356 110 358 113.3 360.5 C118 364 122 368 125.7 372.9 C130 379 134 385 138.1 390.3 C143 396 148 400.5 151.5 400.6 C155 400.5 160 396 164.9 390.3 C169 385 173 379 177.3 372.9 C181 368 185 364 189.7 360.5 C193 358 197 356 202.1 353 C211 349 219 343 227 335.7 C233 330 239 322 244.3 313.3 C247 308 249 302 251.7 293.5 C256 280 260 265 263 256.2 C267 245 268 228 266.6 219 C266 210 261 200 256.4 189 C256 182 255 172 254 159 C253 140 251 125 247.6 110.3 C243 92 236 70 229.3 55.5 C223 40 215 28 207.4 26.7 C203 26.7 200 29 196.4 33.6 C188 40 178 60 172.7 73.8 C170 80 167 90 165.4 101.2 C161 101.5 156 101.9 151.5 101.9 C147 101.9 142 101.5 137.6 101.2 C136 90 133 80 130.3 73.8 C125 60 115 40 106.6 33.6 C103 29 99 26.7 95.6 26.7 Z"/></clipPath>
<linearGradient id="b5" x1="0" y1="0" x2="0" y2="1"><stop offset="0" stop-color="#5c6880"/><stop offset="0.5" stop-color="#3a465c" stop-opacity="0.7"/><stop offset="1" stop-color="#1a2639" stop-opacity="0"/></linearGradient>
</defs>
<rect width="302" height="427" fill="url(#sky)"/>
<path d="M0 97 C40 93 110 92 140 96 L200 92 C215 88 228 80 238.8 79 C245 80 248 81 251 81.5 C258 84 262 87 266 86.5 C270 84 274 82 278.3 81.5 C285 80 292 79 302 77.8 L302 175 C250 170 200 168 150 168 L0 158 Z" fill="url(#b1)"/>
<path d="M0 150 C12 146 25 144 38 150 C55 158 90 160 120 158 L190 172 C230 168 270 168 302 168 L302 245 C270 242 240 238 210 240 L0 250 Z" fill="url(#b2)"/>
<path d="M0 250 C15 245 28 240 45 250 L120 250 L210 240 C225 232 240 226 262 228 C275 222 290 214 302 213 L302 329 C285 330 270 331 265 332 C258 336 255 338 253.7 340 C252 360 245 369 235 369 C225 369 218 360 216 345 L0 330 Z" fill="url(#b3)"/>
<path d="M0 318 C10 300 30 286 55 290 C80 300 100 330 110 340 L0 360 Z" fill="url(#b4)" opacity="0.8"/>
<path d="M253.7 340 C258 336 265 332 302 329 L302 400 L253.7 400 Z" fill="url(#b5)"/>
<g fill="#dfe4ee" opacity="0.7">
<circle cx="18" cy="20" r="0.8"/><circle cx="42" cy="21" r="0.8"/><circle cx="65" cy="14" r="0.8"/><circle cx="104" cy="14" r="0.8"/><circle cx="137" cy="25" r="0.8"/><circle cx="208" cy="14" r="0.8"/><circle cx="228" cy="8" r="0.8"/><circle cx="277" cy="31" r="0.8"/><circle cx="294" cy="5" r="0.8"/><circle cx="36" cy="45" r="0.8"/><circle cx="155" cy="65" r="0.8"/><circle cx="245" cy="53" r="0.8"/><circle cx="281" cy="70" r="0.8"/><circle cx="18" cy="69" r="0.8"/><circle cx="59" cy="70" r="0.8"/><circle cx="22" cy="106" r="0.8"/><circle cx="276" cy="115" r="0.8"/><circle cx="12" cy="129" r="0.8"/><circle cx="293" cy="150" r="0.8"/><circle cx="10" cy="168" r="0.8"/><circle cx="272" cy="212" r="0.8"/><circle cx="14" cy="253" r="0.8"/><circle cx="288" cy="195" r="0.8"/><circle cx="35" cy="288" r="0.8"/><circle cx="268" cy="282" r="0.8"/><circle cx="62" cy="316" r="0.8"/><circle cx="30" cy="345" r="0.8"/><circle cx="72" cy="365" r="0.8"/><circle cx="96" cy="365" r="0.8"/><circle cx="117" cy="387" r="0.8"/><circle cx="196" cy="370" r="0.8"/><circle cx="228" cy="398" r="0.8"/><circle cx="283" cy="400" r="0.8"/><circle cx="21" cy="403" r="0.8"/><circle cx="69" cy="413" r="0.8"/><circle cx="108" cy="413" r="0.8"/><circle cx="163" cy="411" r="0.8"/><circle cx="208" cy="419" r="0.8"/><circle cx="255" cy="411" r="0.8"/><circle cx="274" cy="377" r="0.8"/><circle cx="245" cy="331" r="0.8"/>
</g>
<!-- silhouette -->
<path d="M95.6 26.7 C88 28 80 40 73.7 55.5 C67 70 60 92 55.4 110.3 C52 125 50 140 49 159 C48 172 47 182 46.6 189 C42 200 37 210 36.4 219 C35 228 36 245 40 256.2 C43 265 47 280 51.3 293.5 C54 302 56 308 58.7 313.3 C64 322 70 330 76 335.7 C84 343 92 349 100.9 353 C106 356 110 358 113.3 360.5 C118 364 122 368 125.7 372.9 C130 379 134 385 138.1 390.3 C143 396 148 400.5 151.5 400.6 C155 400.5 160 396 164.9 390.3 C169 385 173 379 177.3 372.9 C181 368 185 364 189.7 360.5 C193 358 197 356 202.1 353 C211 349 219 343 227 335.7 C233 330 239 322 244.3 313.3 C247 308 249 302 251.7 293.5 C256 280 260 265 263 256.2 C267 245 268 228 266.6 219 C266 210 261 200 256.4 189 C256 182 255 172 254 159 C253 140 251 125 247.6 110.3 C243 92 236 70 229.3 55.5 C223 40 215 28 207.4 26.7 C203 26.7 200 29 196.4 33.6 C188 40 178 60 172.7 73.8 C170 80 167 90 165.4 101.2 C161 101.5 156 101.9 151.5 101.9 C147 101.9 142 101.5 137.6 101.2 C136 90 133 80 130.3 73.8 C125 60 115 40 106.6 33.6 C103 29 99 26.7 95.6 26.7 Z" fill="#2a2a2a"/>
<!-- white mask base -->
<path d="M51.9 192 C60 191 70 188 79 185.6 C88 183 95 175 101.8 164.7 C104 162 108 158 114.7 153.4 L129.2 153.4 C134 154 140 158 146.1 164.7 L151.5 164.7 L156.9 164.7 C163 158 169 154 173.8 153.4 L188.3 153.4 C195 158 199 162 201.2 164.7 C208 175 215 183 224 185.6 C233 188 243 191 251.1 192 L252 198 C252 215 251 225 248 240 C245 255 242 268 237.4 278.3 C232 290 228 296 224.9 298.6 C220 305 214 315 209 325 C206 332 202 338 196 341 C190 350 184 360 176 369 C168 376 160 378.5 151.5 378.5 C143 378.5 135 376 127 369 C119 360 113 350 107 341 C101 338 97 332 94 325 C89 315 83 305 78.1 298.6 C75 296 71 290 65.6 278.3 C61 268 58 255 55 240 C52 225 51 215 51 198 Z" fill="#f3f3f3"/>
<g clip-path="url(#clipS)"><use href="#halfL"/>
<use href="#halfL" transform="translate(303,0) scale(-1,1)"/></g>

<!-- translucent facets -->
<path d="M60 200 L105 225 L125 283 L95 300 L70 270 Z" fill="#000" opacity="0.05"/>
<path d="M242 200 L197 225 L177 283 L207 300 L232 270 Z" fill="#000" opacity="0.05"/>
<path d="M122 214 L151 250 L131 283 Z" fill="#000" opacity="0.06"/>
<path d="M180 214 L151 250 L171 283 Z" fill="#000" opacity="0.06"/>
<path d="M52 218 C70 230 85 245 100 262 C85 258 70 250 55 240 Z" fill="#000" opacity="0.07"/>
<path d="M250 218 C232 230 217 245 202 262 C217 258 232 250 247 240 Z" fill="#000" opacity="0.07"/>
<path d="M104 250 L151 300 L124 320 C112 305 104 285 104 250 Z" fill="#fff" opacity="0.35"/>
<path d="M198 250 L151 300 L178 320 C190 305 198 285 198 250 Z" fill="#fff" opacity="0.35"/>
<!-- lower chin structure -->
<g clip-path="url(#clipS)">
<path d="M62.7 280 C68 290 74 298 79.1 303.7 C88 316 96 328 102.9 336.6 C105 338 107 339 108.3 339.4 L117.5 338.4 L150.4 378.6 L185.1 338.4 L197.9 339.4 C205 328 212 315 218 305.5 C226 297 233 290 239 283.6 L250 283.6 L252 420 L50 420 L50 280 Z" fill="#2a2a2a"/>
<path d="M117.5 338.4 C128 342 140 344 151 344 C162 344 174 342 185.1 338.4 C182 352 172 366 150.4 378.6 C129 366 120 352 117.5 338.4 Z" fill="#fbfbfb"/>
<path d="M128 344 C138 346 145 347 151 347 C157 347 164 346 174 344 L151 366 Z" fill="#ffffff"/>
<path d="M108 322 C120 332 135 338 151 339 C167 338 182 332 194 322 L197.9 339.4 C190 342 186 340 185.1 338.4 C172 343 160 345 151 345 C142 345 130 343 117.5 338.4 C116 340 112 341 108.3 339.4 Z" fill="#c2c2c2"/>
<path d="M66.3 269 C72 280 80 292 90 303 C100 315 108 325 114 336 L108.3 339.4 C100 330 92 318 84 308 C76 296 70 284 66.3 269 Z" fill="#a9a9a9"/>
<path d="M236.7 269 C231 280 223 292 213 303 C203 315 195 325 189 336 L194.7 339.4 C203 330 211 318 219 308 C227 296 233 284 236.7 269 Z" fill="#a9a9a9"/>
<path d="M95.5 269 C98 282 100 295 103 305 C107 315 112 322 118 328 C110 322 104 314 100 305 C97 295 96 282 95.5 269 Z" fill="#c8c8c8"/>
<path d="M207.5 269 C205 282 203 295 200 305 C196 315 191 322 185 328 C193 322 199 314 203 305 C206 295 207 282 207.5 269 Z" fill="#c8c8c8"/>
</g>
<!-- blaze -->
<path d="M151.5 126.8 C153 138 155.5 152 156.9 164.7 C158 190 157 230 156 262 L151.5 282 L147 262 C146 230 145 190 146.1 164.7 C147.5 152 150 138 151.5 126.8 Z" fill="#f7f7f7"/>
<path d="M151.5 237 L155 245.4 L151.5 254 L148 245.4 Z" fill="#bcbcbc"/>
<!-- under nose & mouth -->
<path d="M130.3 309 L172 309 L170.5 327.5 C162 329 141 329 132 327.5 Z" fill="#d2d2d2"/>
<path d="M132 325.5 C140 325 146 325 151 327 C156 325 162 325 169 325.5 L168 329 C160 331 142 331 133 329 Z" fill="#1e1e1e"/>
<!-- nose -->
<path d="M128.4 283.6 C134 282 142 281 150.4 280.9 C159 281 167 282 173.2 283.6 C176 287 177 292 176 296.4 C176 303 174 308 169 311 C162 313 156 316 150.4 319.3 C145 316 139 313 132.1 311 C127 308 125 303 124.8 296.4 C124 292 125 287 128.4 283.6 Z" fill="#2b2b2b"/>
<path d="M130 285 C138 282 163 282 171 285 L160 292 L150.4 288 L141 292 Z" fill="#383838"/>
<path d="M132.1 311 C139 313 145 316 150.4 319.3 C156 316 162 313 169 311 L160 306 L150.4 310 L141 306 Z" fill="#232323"/>
<circle cx="134.5" cy="300.5" r="4.2" fill="#1a1a1a"/><circle cx="166.5" cy="300.5" r="4.2" fill="#1a1a1a"/>
<path d="M149.5 294 L150.4 318 L151.5 294 Z" fill="#111"/>
<!-- irises -->
<circle cx="104.6" cy="204.5" r="9" fill="url(#iris)"/><circle cx="104.6" cy="204.5" r="3.6" fill="#111"/>
<circle cx="197.8" cy="204.5" r="9" fill="url(#iris)"/><circle cx="197.8" cy="204.5" r="3.6" fill="#111"/>
<path d="M88 196 C96 193 106 193 114 197 L113 201 C104 197 96 197 86 199 Z" fill="#d9d9d9"/>
<path d="M215 196 C207 193 197 193 189 197 L190 201 C199 197 207 197 217 199 Z" fill="#d9d9d9"/>
</svg>

<!-- HUSKY END -->
<!-- v scrollbar -->
<div class="a" style="left:1012px;top:157px;width:16px;height:17px;background:#ececec"></div>
<svg style="left:1015px;top:162px" width="10" height="7" viewBox="0 0 10 7"><path d="M1 6 L5 2 L9 6" fill="none" stroke="#444" stroke-width="2"/></svg>
<div class="a" style="left:1012px;top:285px;width:15px;height:277px;background:#cdcdcd"></div>
<div class="a" style="left:1012px;top:673px;width:16px;height:17px;background:#ececec"></div>
<svg style="left:1015px;top:678px" width="10" height="7" viewBox="0 0 10 7"><path d="M1 1 L5 5 L9 1" fill="none" stroke="#444" stroke-width="2"/></svg>
<div class="a" style="left:1030px;top:117px;width:1px;height:610px;background:#d0d0d0"></div>
<div class="a" style="left:1028px;top:117px;width:2px;height:611px;background:#f7f7f7"></div>
<div class="a" style="left:1031px;top:117px;width:2px;height:611px;background:#f7f7f7"></div>

<!-- PAGE NAV + H SCROLL -->
<div class="a" style="left:50px;top:690px;width:978px;height:17px;background:#f2f2f2"></div>
<div class="a" style="left:50px;top:690px;width:490px;height:1px;background:#8a8a8a"></div>
<div class="a" style="left:539px;top:690px;width:1px;height:17px;background:#6e6e6e"></div>
<svg style="left:197px;top:690px" width="89" height="17" viewBox="0 0 89 17"><path d="M0.5 0.5 L5.5 16.5 H82.5 L87.5 0.5" fill="#fff" stroke="#8a8a8a" stroke-width="1"/></svg>
<div class="a" style="left:285px;top:690px;width:255px;height:1px;background:#8a8a8a"></div>
<div class="t" style="left:210px;top:691px;font-size:11.3px">Страница 1</div>
<div class="a" style="left:32px;top:706px;width:996px;height:1px;background:#dadada"></div>
<div class="a" style="left:540px;top:690px;width:17px;height:17px;background:#ececec"></div>
<svg style="left:544px;top:694px" width="8" height="9" viewBox="0 0 8 9"><path d="M6 1 L2 4.5 L6 8" fill="none" stroke="#444" stroke-width="2"/></svg>
<div class="a" style="left:557px;top:691px;width:437px;height:15px;background:#cccccc"></div>
<div class="a" style="left:994px;top:690px;width:17px;height:17px;background:#ececec"></div>
<svg style="left:998px;top:694px" width="8" height="9" viewBox="0 0 8 9"><path d="M2 1 L6 4.5 L2 8" fill="none" stroke="#444" stroke-width="2"/></svg>
<div class="a" style="left:1011px;top:690px;width:17px;height:17px;background:#fff"></div>
<svg style="left:1013px;top:692px" width="13" height="13" viewBox="0 0 13 13" fill="none" stroke="#333" stroke-width="1"><circle cx="5" cy="5" r="4.3"/><path d="M8 8 L12 12" stroke-width="1.6"/><path d="M5 2.5V3.5M5 6.5V7.5M2.5 5H3.5M6.5 5H7.5"/></svg>

<!-- PALETTE BAR (bottom doc palette) -->
<div class="a" style="left:32px;top:707px;width:996px;height:21px;background:#f2f2f2"></div>
<div id="docpal"><div class="a" style="left:96px;top:709px;width:17px;height:17px;background:#fff;border:1px solid #777"></div><svg style="left:96px;top:709px" width="17" height="17"><path d="M3 14 L14 3" stroke="#d03030" stroke-width="1"/></svg><div class="a" style="left:113px;top:709px;width:17px;height:17px;background:#ffffff;border:1px solid #8a8a8a;border-left:none"></div><div class="a" style="left:130px;top:709px;width:17px;height:17px;background:#f0f0f0;border:1px solid #8a8a8a;border-left:none"></div><div class="a" style="left:147px;top:709px;width:17px;height:17px;background:#b3b3b3;border:1px solid #8a8a8a;border-left:none"></div><div class="a" style="left:164px;top:709px;width:17px;height:17px;background:#808080;border:1px solid #8a8a8a;border-left:none"></div><div class="a" style="left:181px;top:709px;width:17px;height:17px;background:#4d4d4d;border:1px solid #8a8a8a;border-left:none"></div><div class="a" style="left:198px;top:709px;width:17px;height:17px;background:#333333;border:1px solid #8a8a8a;border-left:none"></div><div class="a" style="left:215px;top:709px;width:17px;height:17px;background:#333333;border:1px solid #8a8a8a;border-left:none"></div><div class="a" style="left:232px;top:709px;width:17px;height:17px;background:#2b2b2b;border:1px solid #8a8a8a;border-left:none"></div><div class="a" style="left:249px;top:709px;width:17px;height:17px;background:#1a1a1a;border:1px solid #8a8a8a;border-left:none"></div><div class="a" style="left:266px;top:709px;width:17px;height:17px;background:#0e9ae0;border:1px solid #8a8a8a;border-left:none"></div><div class="a" style="left:283px;top:709px;width:17px;height:17px;background:#0e9ae0;border:1px solid #8a8a8a;border-left:none"></div><div class="a" style="left:300px;top:709px;width:17px;height:17px;background:#1a8fe6;border:1px solid #8a8a8a;border-left:none"></div><div class="a" style="left:317px;top:709px;width:17px;height:17px;background:#444444;border:1px solid #8a8a8a;border-left:none"></div><svg style="left:34px;top:711px" width="6" height="14"><g fill="#bbb"><rect x="1" y="0" width="1" height="1"/><rect x="3" y="2" width="1" height="1"/><rect x="1" y="4" width="1" height="1"/><rect x="3" y="6" width="1" height="1"/><rect x="1" y="8" width="1" height="1"/><rect x="3" y="10" width="1" height="1"/><rect x="1" y="12" width="1" height="1"/></g></svg><svg style="left:47px;top:714px" width="5" height="8"><path d="M0 0L4 4L0 8Z" fill="#666"/></svg><svg style="left:62px;top:711px" width="14" height="14" viewBox="0 0 14 14"><path d="M1.8 12.2 L8.5 5.5" stroke="#333" stroke-width="2.6" stroke-linecap="round"/><path d="M2 12 L7.5 6.5" stroke="#fff" stroke-width="0.9"/><path d="M2 12 L4.8 9.2" stroke="#e8731a" stroke-width="1.2"/><path d="M8 3.5 L10.5 6" stroke="#1e1e1e" stroke-width="2.2"/><path d="M10 4 L12 2" stroke="#1e1e1e" stroke-width="2.8" stroke-linecap="round"/></svg><svg style="left:83px;top:714px" width="8" height="9"><path d="M6 1 L2 4.5 L6 8" fill="none" stroke="#ccc" stroke-width="1.6"/></svg><svg style="left:989px;top:713px" width="8" height="9"><path d="M2 1 L6 4.5 L2 8" fill="none" stroke="#ccc" stroke-width="1.6"/></svg><svg style="left:1008px;top:714px" width="9" height="8"><path d="M1 1 L4 4 L1 7 M5 1 L8 4 L5 7" fill="none" stroke="#b8b8b8" stroke-width="1.1"/></svg></div>

<!-- DOCKER -->
<div class="a" style="left:1033px;top:117px;width:312px;height:24px;background:#ececec;border-bottom:1px solid #d4d4d4"></div>
<div class="t" style="left:1039px;top:122px;font-size:12px;color:#222">Советы</div>
<svg style="left:1309px;top:124px" width="11" height="9" viewBox="0 0 11 9"><path d="M0 0 L5 4.5 L0 9 Z M5.5 0 L10.5 4.5 L5.5 9 Z" fill="#bdbdbd"/></svg>
<svg style="left:1328px;top:123px" width="10" height="10" viewBox="0 0 10 10"><path d="M1 1L9 9M9 1L1 9" stroke="#b0b0b0" stroke-width="1.4"/></svg>
<div class="a" style="left:1033px;top:141px;width:291px;height:557px;background:#fff"></div>
<div class="a" style="left:1033px;top:698px;width:291px;height:30px;background:#f2f2f2"></div>
<div class="a" style="left:1324px;top:141px;width:1px;height:587px;background:#c8c8c8"></div>
<div class="a" style="left:1325px;top:141px;width:20px;height:587px;background:#e8e8e8"></div>
<div class="a" style="left:1325px;top:141px;width:20px;height:87px;background:#bdbdbd"></div>
<div class="a" style="left:1345px;top:117px;width:1px;height:611px;background:#d8d8d8"></div>

<!-- RIGHT PALETTE -->
<div class="a" style="left:1346px;top:117px;width:20px;height:611px;background:#f2f2f2"></div>
<div id="rpal"><div class="a" style="left:1347px;top:182px;width:18px;height:17px;background:#fff;border:1px solid #8a8a8a"></div><svg style="left:1347px;top:182px" width="18" height="17"><path d="M3 14 L15 3" stroke="#d03030" stroke-width="1"/></svg><div class="a" style="left:1347px;top:199px;width:18px;height:17px;background:#000000;border:1px solid #8a8a8a;border-top:none"></div><div class="a" style="left:1347px;top:216px;width:18px;height:16px;background:#1a1a1a;border:1px solid #8a8a8a;border-top:none"></div><div class="a" style="left:1347px;top:232px;width:18px;height:17px;background:#333333;border:1px solid #8a8a8a;border-top:none"></div><div class="a" style="left:1347px;top:249px;width:18px;height:17px;background:#4d4d4d;border:1px solid #8a8a8a;border-top:none"></div><div class="a" style="left:1347px;top:266px;width:18px;height:17px;background:#666666;border:1px solid #8a8a8a;border-top:none"></div><div class="a" style="left:1347px;top:283px;width:18px;height:17px;background:#808080;border:1px solid #8a8a8a;border-top:none"></div><div class="a" style="left:1347px;top:300px;width:18px;height:17px;background:#999999;border:1px solid #8a8a8a;border-top:none"></div><div class="a" style="left:1347px;top:317px;width:18px;height:16px;background:#b3b3b3;border:1px solid #8a8a8a;border-top:none"></div><div class="a" style="left:1347px;top:333px;width:18px;height:17px;background:#cccccc;border:1px solid #8a8a8a;border-top:none"></div><div class="a" style="left:1347px;top:350px;width:18px;height:17px;background:#e6e6e6;border:1px solid #8a8a8a;border-top:none"></div><div class="a" style="left:1347px;top:367px;width:18px;height:17px;background:#ffffff;border:1px solid #8a8a8a;border-top:none"></div><div class="a" style="left:1347px;top:384px;width:18px;height:17px;background:#0000ff;border:1px solid #8a8a8a;border-top:none"></div><div class="a" style="left:1347px;top:401px;width:18px;height:16px;background:#00ffff;border:1px solid #8a8a8a;border-top:none"></div><div class="a" style="left:1347px;top:417px;width:18px;height:17px;background:#00ff00;border:1px solid #8a8a8a;border-top:none"></div><div class="a" style="left:1347px;top:434px;width:18px;height:17px;background:#ffff00;border:1px solid #8a8a8a;border-top:none"></div><div class="a" style="left:1347px;top:451px;width:18px;height:17px;background:#ff0000;border:1px solid #8a8a8a;border-top:none"></div><div class="a" style="left:1347px;top:468px;width:18px;height:17px;background:#ff00ff;border:1px solid #8a8a8a;border-top:none"></div><div class="a" style="left:1347px;top:485px;width:18px;height:17px;background:#9900cc;border:1px solid #8a8a8a;border-top:none"></div><div class="a" style="left:1347px;top:502px;width:18px;height:16px;background:#ff6600;border:1px solid #8a8a8a;border-top:none"></div><div class="a" style="left:1347px;top:518px;width:18px;height:17px;background:#ff99cc;border:1px solid #8a8a8a;border-top:none"></div><div class="a" style="left:1347px;top:535px;width:18px;height:17px;background:#663333;border:1px solid #8a8a8a;border-top:none"></div><div class="a" style="left:1347px;top:552px;width:18px;height:17px;background:#ccccff;border:1px solid #8a8a8a;border-top:none"></div><div class="a" style="left:1347px;top:569px;width:18px;height:17px;background:#9999ff;border:1px solid #8a8a8a;border-top:none"></div><div class="a" style="left:1347px;top:586px;width:18px;height:16px;background:#6699ff;border:1px solid #8a8a8a;border-top:none"></div><div class="a" style="left:1347px;top:602px;width:18px;height:17px;background:#6666ff;border:1px solid #8a8a8a;border-top:none"></div><div class="a" style="left:1347px;top:619px;width:18px;height:17px;background:#6666cc;border:1px solid #8a8a8a;border-top:none"></div><div class="a" style="left:1347px;top:636px;width:18px;height:17px;background:#003399;border:1px solid #8a8a8a;border-top:none"></div><div class="a" style="left:1347px;top:653px;width:18px;height:17px;background:#000066;border:1px solid #8a8a8a;border-top:none"></div><div class="a" style="left:1347px;top:670px;width:18px;height:17px;background:#336699;border:1px solid #8a8a8a;border-top:none"></div><svg style="left:1349px;top:120px" width="14" height="6"><g fill="#c4c4c4"><rect x="0" y="0" width="1" height="1"/><rect x="1" y="2" width="1" height="1"/><rect x="0" y="4" width="1" height="1"/><rect x="2" y="0" width="1" height="1"/><rect x="3" y="2" width="1" height="1"/><rect x="2" y="4" width="1" height="1"/><rect x="4" y="0" width="1" height="1"/><rect x="5" y="2" width="1" height="1"/><rect x="4" y="4" width="1" height="1"/><rect x="6" y="0" width="1" height="1"/><rect x="7" y="2" width="1" height="1"/><rect x="6" y="4" width="1" height="1"/><rect x="8" y="0" width="1" height="1"/><rect x="9" y="2" width="1" height="1"/><rect x="8" y="4" width="1" height="1"/><rect x="10" y="0" width="1" height="1"/><rect x="11" y="2" width="1" height="1"/><rect x="10" y="4" width="1" height="1"/><rect x="12" y="0" width="1" height="1"/><rect x="13" y="2" width="1" height="1"/><rect x="12" y="4" width="1" height="1"/></g></svg><svg style="left:1354px;top:131px" width="5" height="8"><path d="M0 0L4 4L0 8Z" fill="#666"/></svg><svg style="left:1350px;top:148px" width="13" height="13" viewBox="0 0 13 13"><path d="M1.5 11.5 L8 5" stroke="#c8c8c8" stroke-width="2.2"/><path d="M7.5 2.5 L10.5 5.5 M8.5 1.5 L11.5 4.5" stroke="#c8c8c8" stroke-width="2"/></svg><svg style="left:1351px;top:169px" width="11" height="7"><path d="M1 6 L5.5 1.5 L10 6" fill="none" stroke="#d0d0d0" stroke-width="1.6"/></svg><svg style="left:1351px;top:691px" width="11" height="7"><path d="M1 1 L5.5 5.5 L10 1" fill="none" stroke="#b8b8b8" stroke-width="1.6"/></svg><svg style="left:1352px;top:709px" width="9" height="8"><path d="M1 1 L4 4 L1 7 M5 1 L8 4 L5 7" fill="none" stroke="#b8b8b8" stroke-width="1.1"/></svg></div>

<!-- STATUS BAR -->
<div class="a" style="left:0;top:728px;width:1366px;height:1px;background:#d4d4d4"></div>
<div class="a" style="left:0;top:729px;width:1366px;height:37px;background:#f2f2f2"></div>
<div class="t" style="left:36px;top:741px;font-size:12.2px">Следующий щелчок - перетаскивание/масштабирование; второй щелчок - поворот/наклон; инструмент с двойным щелчком выбирает все объекты; Shift+щелчок - выбор нескольких элементов; Alt+щелчок - цифры</div>
<div class="t" style="left:1348px;top:741px;font-size:12px">Не</div>

<!-- DOCKER CONTENT -->
<div class="t" style="left:1040px;top:158px;font-size:13.8px;line-height:16px;font-weight:bold">Выделение объектов</div>
<svg style="left:1046px;top:183px" width="11" height="20" viewBox="0 0 11 20"><path d="M0.5 0.5 L10 9.5 L6 10 L8.5 17.5 L6.5 19 L3.8 11.3 L0.5 14 Z" fill="#111"/></svg>
<div class="t" style="left:1063px;top:185px;font-size:11px;line-height:13px;font-weight:bold">Указатель</div>
<div class="a" style="left:1048px;top:209px;width:275px;font-size:11.1px;line-height:17px;color:#2a2a2a;white-space:nowrap">Чтобы выбрать объект, щелкните его. Удерживайте<br>нажатой клавишу <b style="color:#000">Alt</b>, чтобы выбрать объект,<br>который находится за другим объектом, или<br>клавишу <b style="color:#000">Ctrl</b>, чтобы выбрать объект в группе.</div>
<div class="a" style="left:1048px;top:282px;width:275px;font-size:11.1px;line-height:17px;color:#2a2a2a;white-space:nowrap">Чтобы выбрать несколько объектов, щелкните<br>каждый объект, удерживая нажатой клавишу <b style="color:#000">Shift</b>,<br>или перетащите указатель для образования<br>выделяющей рамки вокруг объектов.</div>
<div class="a" style="left:1048px;top:355px;width:275px;font-size:11.1px;line-height:17px;color:#2a2a2a;white-space:nowrap">Чтобы выбрать все объекты, дважды щелкните<br><b style="color:#000">указатель</b>.</div>
<div class="a" style="left:1040px;top:216px;width:3px;height:3px;border-radius:50%;background:#333"></div>
<div class="a" style="left:1040px;top:289px;width:3px;height:3px;border-radius:50%;background:#333"></div>
<div class="a" style="left:1040px;top:362px;width:3px;height:3px;border-radius:50%;background:#333"></div>
<div class="a" style="left:1040px;top:403px;width:277px;height:1px;background:#cacaca"></div>
<div class="t" style="left:1040px;top:421px;font-size:13.8px;line-height:16px;font-weight:bold">Подробнее</div>
<svg style="left:1046px;top:449px" width="18" height="18" viewBox="0 0 18 18"><circle cx="9" cy="8.5" r="7.8" fill="none" stroke="#111" stroke-width="1.4"/><rect x="8" y="7" width="2" height="6" fill="#111"/><rect x="8" y="4" width="2" height="2" fill="#111"/><rect x="7" y="12" width="4" height="1.2" fill="#111"/><rect x="7" y="7" width="2" height="1.2" fill="#111"/></svg>
<div class="t" style="left:1075px;top:451px;font-size:11.5px;line-height:13px;font-weight:bold">Раздел справки</div>
<div class="t" style="left:1075px;top:469px;font-size:11px;line-height:13px;color:#3b8ad6">Выделение объектов</div>
<svg style="left:1038px;top:706px" width="16" height="17" viewBox="0 0 16 17" fill="none" stroke="#222" stroke-width="1.2"><path d="M0.5 8 L8 0.8 L15.5 8 M2.5 8 V16.4 H13.5 V8"/><path d="M3 5.5 V0.6 H5.5" /></svg>
<svg style="left:1274px;top:707px" width="17" height="16" viewBox="0 0 17 16"><path d="M0.8 8 L7 1.2 V4.8 H16 V11.2 H7 V14.8 Z" fill="none" stroke="#333" stroke-width="1.2"/></svg>
<svg style="left:1302px;top:707px" width="17" height="16" viewBox="0 0 17 16"><path d="M16.2 8 L10 1.2 V4.8 H1 V11.2 H10 V14.8 Z" fill="none" stroke="#c8c8c8" stroke-width="1.2"/></svg>
<!-- docker vertical tabs -->
<svg style="left:1326px;top:143px" width="20" height="20" viewBox="0 0 20 20"><path d="M1 1 L9.5 9.5 L6 10 L8 15 L6.3 16 L4.3 11 L1 14 Z" fill="#222"/><text x="11.5" y="10" font-family="Liberation Sans" font-size="11" fill="#333">?</text></svg>
<div class="t" style="left:1327px;top:166px;font-size:12px;line-height:14px;transform-origin:0 0;transform:translate(14px,0) rotate(90deg)">Советы</div>
<svg style="left:1326px;top:231px" width="18" height="18" viewBox="0 0 18 18"><path d="M1 6 L6 1 L11 6 L6 11 Z" fill="none" stroke="#222" stroke-width="1.3"/><path d="M3 7.5 L6 10 L9 7.5 Z" fill="#e07000"/><path d="M12 9 V15 M14.5 9 V15 M9 16.5 H16" stroke="#222" stroke-width="1.2"/></svg>
<div class="t" style="left:1327px;top:254px;font-size:12px;line-height:14px;transform-origin:0 0;transform:translate(14px,0) rotate(90deg)">Свойства</div>
<svg style="left:1326px;top:331px" width="18" height="18" viewBox="0 0 18 18" fill="#fff" stroke="#222" stroke-width="1.2"><path d="M1.5 11 L9 15 L16.5 11 L9 7 Z"/><path d="M1.5 8 L9 12 L16.5 8 L9 4 Z"/><path d="M1.5 5 L9 9 L16.5 5 L9 1 Z"/></svg>
<div class="t" style="left:1327px;top:354px;font-size:12px;line-height:14px;transform-origin:0 0;transform:translate(14px,0) rotate(90deg)">Объекты</div>
<div class="a" style="left:1325px;top:410px;width:20px;height:1px;background:#d0d0d0"></div>
<svg style="left:1328px;top:433px" width="13" height="13" viewBox="0 0 13 13"><path d="M6.5 0V13M0 6.5H13" stroke="#b8b8b8" stroke-width="1.6"/></svg>
<!-- status bar icons -->
<svg style="left:10px;top:739px" width="21" height="20" viewBox="0 0 21 20"><path d="M7 0.5 H9.5 L10 3 L12 3.8 L14 2.3 L15.8 4.1 L14.3 6.1 L15.1 8 L17.5 8.5 V11 L15.1 11.5 L14.3 13.4 L15.8 15.4 L14 17.2 L12 15.7 L10 16.5 L9.5 19 H7 L6.5 16.5 L4.5 15.7 L2.5 17.2 L0.7 15.4 L2.2 13.4 L1.4 11.5 L-1 11 V8.5 L1.4 8 L2.2 6.1 L0.7 4.1 L2.5 2.3 L4.5 3.8 L6.5 3 Z" transform="translate(1.5,-1.5) scale(0.9)" fill="#2b2b2b"/><circle cx="9" cy="8" r="3.2" fill="#f2f2f2"/><path d="M16 19 L20 15 V19 Z" fill="#666"/></svg>
<svg style="left:1304px;top:738px" width="17" height="18" viewBox="0 0 17 18"><path d="M1 9 L7.5 2.5 L14 9 L7.5 15.5 Z" fill="#fff" stroke="#222" stroke-width="1.6"/><path d="M7.5 2.5 L10.5 -0.5 L15 4 L12 7" fill="#333"/><path d="M4 10.5 H11 L7.5 13 Z" fill="#e00000"/><path d="M12 17 L16 13 V17 Z" fill="#e00000"/></svg>
<div class="a" style="left:1322px;top:736px;width:22px;height:22px;background:#fff;border:1px solid #a8a8a8"></div>
<svg style="left:1322px;top:736px" width="22" height="22" viewBox="0 0 22 22"><path d="M1.5 20.5 L20.5 1.5" stroke="#c01818" stroke-width="2"/></svg>

<!-- TOOLBOX ICONS -->
<div class="a" style="left:4px;top:122px;width:24px;height:24px;background:#fff;border:1px solid #b0b0b0"></div>
<svg style="left:0px;top:0px" width="30" height="150" viewBox="0 0 30 150"><path d="M13.3 126.5 L21 134.8 L17.6 135.3 L20 140.5 L17.8 141.6 L15.5 136.5 L13.3 139 Z" fill="#1e1e1e" stroke="#1e1e1e" stroke-width="0.9" stroke-linejoin="round"/></svg>
<svg style="left:23px;top:141px" width="5" height="5" viewBox="0 0 5 5"><path d="M5 0 V5 H0 Z" fill="#8a8a8a"/></svg>
<svg style="left:8px;top:154px" width="18" height="18" viewBox="0 0 18 18"><path d="M4.5 1 C2 4 2 10 7.5 15.5" fill="none" stroke="#222" stroke-width="1.1"/><rect x="2" y="5" width="3.6" height="3.6" fill="#fff" stroke="#222" stroke-width="1"/><path d="M8.5 10 L15 11.5 L12.5 15.5 Z" fill="#222"/></svg>
<svg style="left:23px;top:168px" width="5" height="5" viewBox="0 0 5 5"><path d="M5 0 V5 H0 Z" fill="#8a8a8a"/></svg>
<div class="a" style="left:5px;top:181px;width:22px;height:1px;background:#d8d8d8"></div>
<svg style="left:0px;top:0px" width="30" height="215" viewBox="0 0 30 215" fill="none" stroke="#1e1e1e" stroke-width="1.7"><path d="M12.9 191.5 V197.5 M8 197 H19.8 V201 M12.9 199.5 V203.3 H23.8 M19 203 V208.5"/></svg>
<svg style="left:23px;top:206px" width="5" height="5" viewBox="0 0 5 5"><path d="M5 0 V5 H0 Z" fill="#8a8a8a"/></svg>
<svg style="left:6px;top:220px" width="18" height="18" viewBox="0 0 18 18" fill="none" stroke="#1e1e1e"><circle cx="6.8" cy="7" r="5.3" stroke-width="1.3"/><path d="M10.7 10.9 L16 16.2" stroke-width="2"/></svg>
<svg style="left:23px;top:233px" width="5" height="5" viewBox="0 0 5 5"><path d="M5 0 V5 H0 Z" fill="#8a8a8a"/></svg>
<div class="a" style="left:5px;top:248px;width:22px;height:1px;background:#d8d8d8"></div>
<svg style="left:7px;top:257px" width="18" height="18" viewBox="0 0 18 18" fill="none" stroke="#1e1e1e" stroke-width="1.1"><path d="M4 1 V8 M0.5 4.5 H7.5"/><path d="M4 9.5 V15.5 H6 C6 12 8 12 8 14.5 C8 16 10 16 10 13.5 C10 12 12.5 12 12.5 14 C12.5 15.5 15 15.5 15 13" stroke-width="1.4"/></svg>
<svg style="left:23px;top:271px" width="5" height="5" viewBox="0 0 5 5"><path d="M5 0 V5 H0 Z" fill="#8a8a8a"/></svg>
<svg style="left:7px;top:286px" width="18" height="19" viewBox="0 0 18 19" fill="none" stroke="#1e1e1e" stroke-width="2.2" stroke-linecap="round"><path d="M2 4.5 C3 0 8 1 7.5 5 C7 8 5 10 7 14 C9 18 16 17 15 11.5"/></svg>
<svg style="left:23px;top:300px" width="5" height="5" viewBox="0 0 5 5"><path d="M5 0 V5 H0 Z" fill="#8a8a8a"/></svg>
<div class="a" style="left:8px;top:316px;width:16px;height:16px;border:1.3px solid #1e1e1e"></div>
<svg style="left:23px;top:330px" width="5" height="5" viewBox="0 0 5 5"><path d="M5 0 V5 H0 Z" fill="#8a8a8a"/></svg>
<svg style="left:7px;top:345px" width="18" height="18" viewBox="0 0 18 18"><circle cx="8.9" cy="8.5" r="7.6" fill="none" stroke="#1e1e1e" stroke-width="1.3"/></svg>
<svg style="left:23px;top:359px" width="5" height="5" viewBox="0 0 5 5"><path d="M5 0 V5 H0 Z" fill="#8a8a8a"/></svg>
<svg style="left:7px;top:374px" width="18" height="17" viewBox="0 0 18 17"><path d="M5.2 1 H12.8 L16.7 8.3 L12.8 15.6 H5.2 L1.3 8.3 Z" fill="none" stroke="#1e1e1e" stroke-width="1.3"/></svg>
<svg style="left:23px;top:388px" width="5" height="5" viewBox="0 0 5 5"><path d="M5 0 V5 H0 Z" fill="#8a8a8a"/></svg>
<div class="a" style="left:5px;top:400px;width:22px;height:1px;background:#d8d8d8"></div>
<svg style="left:7px;top:410px" width="18" height="18" viewBox="0 0 18 18"><path d="M1 17 L8.5 1 L16 17 M3.8 11.5 H13.2" fill="none" stroke="#1e1e1e" stroke-width="1.5"/></svg>
<svg style="left:23px;top:424px" width="5" height="5" viewBox="0 0 5 5"><path d="M5 0 V5 H0 Z" fill="#8a8a8a"/></svg>
<div class="a" style="left:5px;top:437px;width:22px;height:1px;background:#d8d8d8"></div>
<svg style="left:7px;top:447px" width="18" height="18" viewBox="0 0 18 18" fill="none" stroke="#1e1e1e" stroke-width="1.1"><path d="M3 14 L15 3 M1 12 L5 16 M13 1 L17 5"/></svg>
<svg style="left:23px;top:461px" width="5" height="5" viewBox="0 0 5 5"><path d="M5 0 V5 H0 Z" fill="#8a8a8a"/></svg>
<svg style="left:7px;top:476px" width="18" height="18" viewBox="0 0 18 18"><path d="M4 4 L14 13" stroke="#1e1e1e" stroke-width="1.2"/><rect x="1.5" y="1.5" width="4.5" height="4.5" fill="#e8731a" stroke="#333" stroke-width="0.8"/><rect x="12" y="11.5" width="4.5" height="4.5" fill="#e8731a" stroke="#333" stroke-width="0.8"/></svg>
<svg style="left:23px;top:490px" width="5" height="5" viewBox="0 0 5 5"><path d="M5 0 V5 H0 Z" fill="#8a8a8a"/></svg>
<div class="a" style="left:5px;top:503px;width:22px;height:1px;background:#d8d8d8"></div>
<svg style="left:7px;top:513px" width="18" height="18" viewBox="0 0 18 18"><path d="M4 4 H16.5 V16.5 H4 Z" fill="#1e1e1e"/><rect x="1.6" y="1.6" width="12.5" height="12.5" fill="#fff" stroke="#1e1e1e" stroke-width="1.2"/></svg>
<svg style="left:23px;top:527px" width="5" height="5" viewBox="0 0 5 5"><path d="M5 0 V5 H0 Z" fill="#8a8a8a"/></svg>
<svg style="left:8px;top:542px" width="16" height="16" viewBox="0 0 16 16"><rect x="0" y="0" width="16" height="16" fill="#1e1e1e"/><g fill="#fff"><rect x="1.0" y="1.0" width="3.5" height="3.5"/><rect x="1.0" y="8.0" width="3.5" height="3.5"/><rect x="4.5" y="4.5" width="3.5" height="3.5"/><rect x="4.5" y="11.5" width="3.5" height="3.5"/><rect x="8.0" y="1.0" width="3.5" height="3.5"/><rect x="8.0" y="8.0" width="3.5" height="3.5"/><rect x="11.5" y="4.5" width="3.5" height="3.5"/><rect x="11.5" y="11.5" width="3.5" height="3.5"/></g></svg>
<div class="a" style="left:5px;top:569px;width:22px;height:1px;background:#d8d8d8"></div>
<svg style="left:7px;top:580px" width="18" height="18" viewBox="0 0 18 18"><path d="M2.2 15.8 L11 7" stroke="#333" stroke-width="3.2" stroke-linecap="round"/><path d="M2.4 15.6 L9.5 8.5" stroke="#fff" stroke-width="1.2"/><path d="M2.4 15.6 L6 12" stroke="#e8731a" stroke-width="1.4"/><path d="M10 4 L14 8" stroke="#1e1e1e" stroke-width="2.6"/><path d="M12.5 5.5 L15 3" stroke="#1e1e1e" stroke-width="3.4" stroke-linecap="round"/></svg>
<svg style="left:23px;top:592px" width="5" height="5" viewBox="0 0 5 5"><path d="M5 0 V5 H0 Z" fill="#8a8a8a"/></svg>
<svg style="left:7px;top:609px" width="18" height="18" viewBox="0 0 18 18"><path d="M1.5 9 L8 2.5 L14.5 9 L8 15.5 Z" fill="#fff" stroke="#1e1e1e" stroke-width="1.6"/><path d="M8 2.5 L10.5 0 L16.5 6 L14.5 9 Z" fill="#2a2a2a"/><path d="M4.5 10 H11.5 L8 12.8 Z" fill="#e00000"/><path d="M12.5 17.5 L17 13 V17.5 Z" fill="#e00000"/></svg>
<svg style="left:23px;top:622px" width="5" height="5" viewBox="0 0 5 5"><path d="M5 0 V5 H0 Z" fill="#8a8a8a"/></svg>
<div class="a" style="left:5px;top:635px;width:22px;height:1px;background:#d8d8d8"></div>
<svg style="left:10px;top:653px" width="12" height="12" viewBox="0 0 12 12"><path d="M6 0V12M0 6H12" stroke="#b8b8b8" stroke-width="1.8"/></svg>

<!-- TITLE ICONS -->
<svg style="left:1252px;top:2px" width="18" height="17" viewBox="0 0 18 17"><path d="M9 1.5 H1.3 V15.3 H14.5 V8" fill="none" stroke="#222" stroke-width="1.2"/><path d="M3.5 14 C3.5 11.5 5 11 7 10.5 C6 9.5 5.8 8.5 5.8 7.5 C5.8 5.5 6.8 4.5 8 4.5 C9.2 4.5 10.2 5.5 10.2 7.5 C10.2 8.5 10 9.5 9 10.5 C11 11 12.5 11.5 12.5 14 Z" fill="#222"/><circle cx="13" cy="4.2" r="3.3" fill="#fff" stroke="#e8843a" stroke-width="1.3"/><path d="M13 2.6 V4.8" stroke="#e8843a" stroke-width="1"/></svg>
<div class="a" style="left:1288px;top:11px;width:11px;height:3px;background:#111"></div>
<svg style="left:1319px;top:2px" width="16" height="16" viewBox="0 0 16 16" fill="#fff" stroke="#111" stroke-width="1.3"><rect x="1.2" y="1.5" width="8.5" height="8"/><rect x="5" y="5.3" width="8.5" height="9"/></svg>
<svg style="left:1347px;top:3px" width="15" height="14" viewBox="0 0 15 14"><path d="M1.5 1.2 L13.5 12.3 M13.5 1.2 L1.5 12.3" stroke="#111" stroke-width="1.7"/></svg>
<!-- PAGE NAV ICONS -->
<svg style="left:52px;top:693px" width="11" height="12" viewBox="0 0 11 12"><path d="M3 0.5 H9.5 V11.5 H0.5 V3 Z M0.5 3 H3 V0.5" fill="#f2f2f2" stroke="#8a8a8a" stroke-width="1"/><path d="M5 4.5 V9.5 M2.5 7 H7.5" stroke="#8a8a8a" stroke-width="1.1"/></svg>
<svg style="left:68px;top:693px" width="11" height="11" viewBox="0 0 11 11"><rect x="0.3" y="0.5" width="1.3" height="10" fill="#b8b8b8"/><path d="M10.5 0.5 V10.5 L3 5.5 Z" fill="#b8b8b8"/></svg>
<svg style="left:86px;top:693px" width="9" height="11" viewBox="0 0 9 11"><path d="M8 0.5 V10.5 L0.5 5.5 Z" fill="#b8b8b8"/></svg>
<div class="t" style="left:101px;top:691px;font-size:12px;color:#b0b0b0">1</div>
<div class="t" style="left:113px;top:691px;font-size:12px;color:#b0b0b0">из</div>
<div class="t" style="left:131px;top:691px;font-size:12px;color:#b0b0b0">1</div>
<svg style="left:145px;top:693px" width="9" height="11" viewBox="0 0 9 11"><path d="M0.5 0.5 V10.5 L8 5.5 Z" fill="#b8b8b8"/></svg>
<svg style="left:159px;top:693px" width="12" height="11" viewBox="0 0 12 11"><path d="M0.5 0.5 V10.5 L8 5.5 Z" fill="#b8b8b8"/><rect x="9.4" y="0.5" width="1.3" height="10" fill="#b8b8b8"/></svg>
<svg style="left:175px;top:693px" width="11" height="12" viewBox="0 0 11 12"><path d="M3 0.5 H9.5 V11.5 H0.5 V3 Z M0.5 3 H3 V0.5" fill="#f2f2f2" stroke="#8a8a8a" stroke-width="1"/><path d="M5 4.5 V9.5 M2.5 7 H7.5" stroke="#8a8a8a" stroke-width="1.1"/></svg>
<svg style="left:531px;top:692px" width="7" height="13"><g fill="#c0c0c0"><rect x="1" y="0" width="1" height="1"/><rect x="3" y="2" width="1" height="1"/><rect x="1" y="4" width="1" height="1"/><rect x="3" y="6" width="1" height="1"/><rect x="1" y="8" width="1" height="1"/><rect x="3" y="10" width="1" height="1"/><rect x="1" y="12" width="1" height="1"/></g></svg>

</body></html>
